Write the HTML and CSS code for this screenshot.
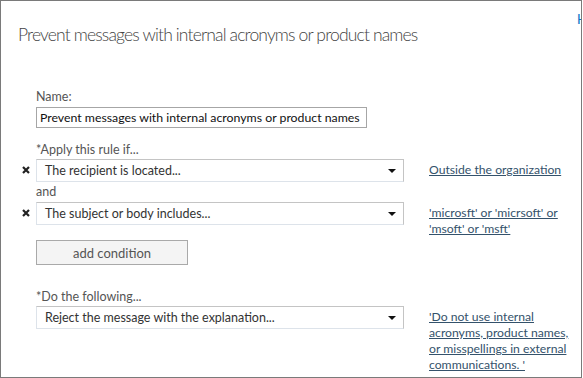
FILE: index.html
```html
<!DOCTYPE html>
<html lang="en">
<head>
    <meta charset="UTF-8">
    <title>New rule</title>
    <link rel="stylesheet" href="styles.css">
</head>
<body>
    <div class="dialog">
        <span class="peek">H</span>
        <h1 class="title">Prevent messages with internal acronyms or product names</h1>
        <div class="form">
            <div class="label">Name:</div>
            <div class="name-box">Prevent messages with internal acronyms or product names</div>

            <div class="label label-apply">*Apply this rule if...</div>
            <div class="rule-row">
                <span class="remove"><svg width="8" height="8" viewBox="0 0 8 8"><path d="M1 1L7 7M7 1L1 7" stroke="#222" stroke-width="2.2"/></svg></span>
                <div class="select">The recipient is located...<span class="arrow"></span></div>
                <a class="value" href="#">Outside the organization</a>
            </div>
            <div class="label label-and">and</div>
            <div class="rule-row">
                <span class="remove"><svg width="8" height="8" viewBox="0 0 8 8"><path d="M1 1L7 7M7 1L1 7" stroke="#222" stroke-width="2.2"/></svg></span>
                <div class="select">The subject or body includes...<span class="arrow"></span></div>
                <a class="value" href="#">'microsft' or 'micrsoft' or 'msoft' or 'msft'</a>
            </div>
            <button class="add-btn">add condition</button>

            <div class="label">*Do the following...</div>
            <div class="rule-row">
                <span></span>
                <div class="select">Reject the message with the explanation...<span class="arrow"></span></div>
                <a class="value" href="#">'Do not use internal acronyms, product names, or misspellings in external communications. '</a>
            </div>
        </div>
    </div>
</body>
</html>
```

FILE: styles.css
```css
body {
    margin: 0;
    font-family: Lato, "Open Sans", sans-serif;
    background: #fff;
}
.dialog {
    position: relative;
    box-sizing: border-box;
    width: 582px;
    height: 378px;
    border: 1px solid #7a7a7a;
    overflow: hidden;
    background: #fff;
}
.peek {
    position: absolute;
    top: 10px;
    left: 576px;
    color: #0072c6;
    font-size: 13px;
}
.title {
    margin: 0;
    padding: 22px 0 0 17px;
    font-size: 17.5px;
    line-height: 24px;
    font-weight: 300;
    letter-spacing: -0.85px;
    color: #444;
}
.form {
    padding-top: 42px;
    font-size: 12.5px;
}
.label {
    margin-left: 35px;
    color: #555;
    line-height: 16px;
    height: 16px;
    margin-bottom: 1px;
}
.label-apply {
    margin-top: 14px;
}
.label-and {
    margin-top: 2px;
    margin-bottom: 2px;
}
.name-box {
    box-sizing: border-box;
    margin: 2px 0 0 35px;
    width: 331px;
    height: 21px;
    border: 1px solid #a6a6a6;
    padding: 1px 3px;
    color: #111;
    font-size: 12.3px;
    line-height: 17px;
    white-space: nowrap;
    overflow: hidden;
}
.rule-row {
    display: grid;
    grid-template-columns: 35px 368px 176px;
    align-items: start;
    height: 23px;
}
.remove {
    margin: 7px 0 0 21px;
    height: 8px;
}
.remove svg {
    display: block;
}
.select {
    position: relative;
    box-sizing: border-box;
    height: 23px;
    border: 1px solid;
    border-color: #c4c4c4 #c4c4c4 #dde3ea #dde3ea;
    padding: 2px 8px;
    color: #333;
    line-height: 17px;
}
.arrow {
    position: absolute;
    right: 7px;
    top: 9px;
    border-left: 4px solid transparent;
    border-right: 4px solid transparent;
    border-top: 4px solid #111;
}
.value {
    margin: 3px 0 0 25px;
    width: 145px;
    color: #34526b;
    font-size: 12.2px;
    line-height: 16px;
}
.add-btn {
    display: block;
    box-sizing: border-box;
    margin: 15px 0 24px 35px;
    width: 152px;
    height: 25px;
    border: 1px solid #a9a9a9;
    background: #f4f4f4;
    color: #555;
    font-family: inherit;
    font-size: 13px;
    padding: 0;
}
```
